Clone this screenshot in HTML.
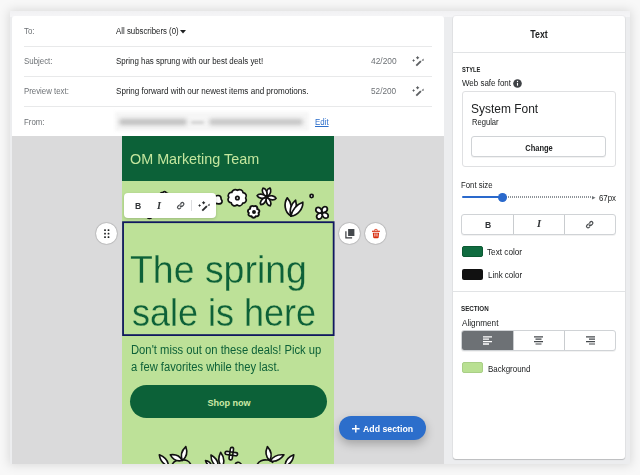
<!DOCTYPE html>
<html><head><meta charset="utf-8"><title>Email editor</title>
<style>
*{box-sizing:border-box;margin:0;padding:0}
html,body{width:640px;height:475px;overflow:hidden;background:#f8f8f8}
body{background:#f8f8f8;font-family:"Liberation Sans",sans-serif;position:relative}
.abs,.t{position:absolute}
.t{white-space:nowrap;display:block}
#frame{left:9.500px;top:10.800px;width:620.500px;height:453.200px;background:#ecedef;box-shadow:0 0 10px 1px rgba(0,0,0,.13)}
#canvas{left:12.200px;top:135.800px;width:432px;height:328px;background:#dadadb}
#card{left:12.400px;top:16px;width:431.600px;height:120px;background:#fff;border-radius:3px 3px 0 0}
.sep{height:1.200px;background:#e8e9ea}
#panel{left:452.500px;top:15.600px;width:172.200px;height:443.200px;background:#fff;border-radius:3px;box-shadow:0 1px 1px rgba(0,0,0,.18),0 0 0 1px rgba(0,0,0,.03)}
#email{left:122px;top:136px;width:212.300px;height:328px;background:#bde198;overflow:hidden}
#ehead{left:0;top:0;width:213px;height:44.800px;background:#0c6138}
#sel{left:122.200px;top:221.500px;width:212.300px;height:114.700px;border:1.800px solid #10185f}
#shop{left:129.5px;top:385px;width:197.5px;height:33px;border-radius:17px;background:#0c6138}
.circ{width:21.200px;height:21.200px;border-radius:50%;background:#fff;box-shadow:0 0 0 .8px rgba(0,0,0,.1),0 0 2px rgba(0,0,0,.15)}
#tb{left:124.200px;top:192.600px;width:92px;height:25.300px;background:#fff;border-radius:4px;box-shadow:0 1px 3px rgba(0,0,0,.18)}
#add{left:338.500px;top:416.100px;width:87.200px;height:24.300px;border-radius:12.200px;background:#2c6ecb;box-shadow:0 4px 10px rgba(0,0,0,.25)}
#fontbox{left:461.5px;top:91px;width:154px;height:76px;border:1px solid #dfe0e2;border-radius:3px;background:#fff}
#change{left:471.100px;top:136.300px;width:135.300px;height:20.600px;border:1px solid #d0d3d6;border-radius:3px;background:#fff;box-shadow:0 1px 0 rgba(0,0,0,.05)}
.grp{left:461.300px;width:154.900px;height:20.5px;border:1px solid #d0d3d6;border-radius:3px;background:#fff;box-shadow:0 1px 0 rgba(0,0,0,.05);overflow:hidden}
.grp i{position:absolute;top:0;bottom:0;width:1px;background:#c9cccf}
.sw{left:461.5px;width:21.5px;height:11px;border-radius:2px}
svg{position:absolute;overflow:visible}
#all{left:0;top:0;width:640px;height:475px;filter:blur(.35px)}

</style></head><body>
<div class="abs" id="all">
<div class="abs" id="frame"></div>
<div class="abs" style="left:10px;top:11px;width:620px;height:5.500px;background:linear-gradient(#f1f1f3,#f5f5f7)"></div>
<div class="abs" id="canvas"></div>
<div class="abs" id="card"></div>
<div class="abs sep" style="left:24px;top:45.5px;width:408px"></div>
<div class="abs sep" style="left:24px;top:75.5px;width:408px"></div>
<div class="abs sep" style="left:24px;top:105.5px;width:408px"></div>
<!-- caret -->
<svg style="left:180px;top:29.7px" width="6" height="4" viewBox="0 0 6 4"><path d="M0 0h6L3 3.6z" fill="#202223"/></svg>
<!-- blurred from -->
<div class="abs" style="left:115px;top:112px;width:194px;height:19px;background:#f6f6f6;filter:blur(1.500px)"></div>
<div class="abs" style="left:119px;top:118.500px;width:68px;height:6.500px;background:#bdbdbd;filter:blur(2px);border-radius:3px"></div>
<div class="abs" style="left:191px;top:120.500px;width:13px;height:3px;background:#d0d0d0;filter:blur(1.500px)"></div>
<div class="abs" style="left:209px;top:118.500px;width:94px;height:6.500px;background:#c2c2c2;filter:blur(2px);border-radius:3px"></div>
<!-- wands -->
<svg class="wand" style="left:412.100px;top:55.900px;color:#5c5f62" width="12" height="11" viewBox="0 0 12 11"><use href="#wand"/></svg>
<svg class="wand" style="left:412.100px;top:85.900px;color:#5c5f62" width="12" height="11" viewBox="0 0 12 11"><use href="#wand"/></svg>
<svg width="0" height="0" style="left:0;top:0"><defs>
<g id="wand"><path d="M4.300 9.700 8.900 5.100" stroke="currentColor" stroke-width="1.900" fill="none"/><path d="M9.500 4.500 11.500 2.500l.2 2.200zM1.6 3.0L2.20 3.90 3.1 4.5 2.20 5.10 1.6 6.0 1.00 5.10 0.10000000000000009 4.5 1.00 3.90zM5.6 -0.10000000000000009L6.32 0.98 7.3999999999999995 1.7 6.32 2.42 5.6 3.5 4.88 2.42 3.8 1.7 4.88 0.98z" fill="currentColor"/></g>
</defs></svg>

<!-- email -->
<div class="abs" id="email">
  <div class="abs" id="ehead"></div>
  <svg id="fl1" style="left:0;top:45px" width="212" height="40" viewBox="122 181 212 40">
    <g fill="#fff" stroke="#111" stroke-width="1.700" stroke-linejoin="round" stroke-linecap="round">
      <!-- peeking flowers near toolbar -->
      <path d="M160.500 196c-1.200-1.800.4-3.800 2.200-3.200.8-1.500 3-1.500 3.600.2 1.800-.2 2.600 1.800 1.500 3z"/>
      <circle cx="149.500" cy="216.300" r="2.200"/>
      <path d="M214 197.5c2-3 7-2.500 7 .5s1.500 1.500 1 4-6.500 2.500-8 0z"/>
      <!-- big scalloped flower -->
      <path transform="translate(.4 .5)" d="M237 189.800c2.800-1.700 5.600.200 5.600 2.400 2.900.300 4.200 3.300 2.600 5.300 1.700 2.600-.200 5.300-2.900 5.100-.800 3-4 3.600-5.700 1.700-2.200 2-5.500.800-5.700-1.900-3-.300-4.200-3.500-2.500-5.400-1.600-2.700.400-5.300 3-5 .600-2.700 3.600-3.600 5.600-2.200z"/>
      <circle cx="237.400" cy="198" r="1.700"/>
      <!-- small 5 petal -->
      <g transform="translate(254 212) scale(1.120) translate(-253.800 -211.400)"><path d="M253.800 206.300c1.800-1 3.400.600 2.800 2.400 2 .200 2.600 2.400 1.200 3.600 1 1.800-.600 3.600-2.400 2.800-.800 1.900-3.200 1.900-3.800 0-1.900.600-3.400-1.200-2.400-2.900-1.500-1.200-.800-3.400 1.200-3.600-.500-1.900 1.400-3.300 3.400-2.300z"/><circle cx="253.800" cy="211.400" r=".9"/></g>
      <!-- daisy -->
      <g transform="translate(266.600 197)">
        <path id="pt" d="M-.2-1c-2.200-2.600-2.100-7 .5-8.600 2.500 1.200 2.700 5.800.5 8.600z" transform="rotate(18)"/>
        <use href="#pt" transform="rotate(78)"/><use href="#pt" transform="rotate(138)"/><use href="#pt" transform="rotate(198)"/><use href="#pt" transform="rotate(258)"/><use href="#pt" transform="rotate(318)"/>
      </g>
      <!-- tulip -->
      <path d="M287.300 197.800c-3.600 5.500-3 14 3.400 18 1.400-6.500.8-13.500-3.400-18z"/>
      <path d="M295.600 200.200c-5 4-6.600 11.200-4.800 15.800 4.600-3 6.600-10.200 4.800-15.800z"/>
      <path d="M302.800 202.200c-6 2-11 8-11.900 13.900 6.600-.8 12.300-7 11.900-13.900z"/>
      <!-- dot -->
      <circle cx="311.600" cy="196" r="1.600"/>
      <!-- 4 petal -->
      <g transform="translate(322 212.800) rotate(38)">
        <path id="p4" d="M0-.6c-3.200-1.200-3.600-6 0-6.800 3.600.8 3.200 5.600 0 6.800z"/>
        <use href="#p4" transform="rotate(90)"/><use href="#p4" transform="rotate(180)"/><use href="#p4" transform="rotate(270)"/>
      </g>
    </g>
  </svg>
  <svg id="fl2" style="left:0;top:308px" width="212" height="20" viewBox="122 444 212 20">
    <g fill="#fff" stroke="#111" stroke-width="1.600" stroke-linejoin="round">
      <path d="M172 465c1.500-4.500 7-6 10-5 3.500-.5 7.500 1 9 5M257 465c1.500-4 6.500-5.500 9.500-5 3-.5 5.500 1 6.500 3M235 465c.5-3 4.500-3.500 5.500-1.500l1.500 1.500" fill="none"/>
      <path d="M168.5 466.0Q167.9 458.0 159.3 454.8Q160.8 463.9 168.5 466.0z"/>
      <path d="M182.0 460.5Q178.8 453.6 170.3 454.8Q174.6 462.3 182.0 460.5z"/>
      <path d="M182.5 460.5Q188.8 455.4 185.8 446.6Q179.1 453.1 182.5 460.5z"/>
      <path d="M211.5 466.0Q210.8 461.3 205.5 460.5Q206.8 465.7 211.5 466.0z"/>
      <path d="M218.0 467.0Q218.8 459.3 211.0 455.0Q210.9 463.9 218.0 467.0z"/>
      <path d="M222.0 467.0Q226.3 459.9 220.6 452.3Q216.4 460.9 222.0 467.0z"/>
      <path d="M269.7 460.5Q273.6 453.4 267.4 446.6Q263.7 455.1 269.7 460.5z"/>
      <path d="M270.3 461.0Q278.4 462.6 284.0 454.8Q274.5 453.8 270.3 461.0z"/>
      <path d="M285.0 466.0Q292.6 463.8 293.8 454.8Q285.3 458.1 285.0 466.0z"/>
      <g transform="translate(231.300 453.600) rotate(8)"><path id="p5" d="M-1.600-1.600v-2.900c0-2.400 3.200-2.400 3.200 0v2.900z"/><use href="#p5" transform="rotate(90)"/><use href="#p5" transform="rotate(180)"/><use href="#p5" transform="rotate(270)"/></g>
    </g>
  </svg>
</div>
<svg style="left:0;top:0" width="640" height="475"><rect x="123.050" y="222.200" width="210.600" height="112.900" fill="none" stroke="#10185f" stroke-width="1.800"/></svg>
<div class="abs" id="shop"></div>

<!-- side controls -->
<div class="abs circ" style="left:96.300px;top:223.300px"></div>
<svg style="left:104px;top:229.200px" width="6" height="9" viewBox="0 0 6 9"><g fill="#202223"><rect x=".150" y=".150" width="1.750" height="1.750" rx=".5"/><rect x="3.650" y=".150" width="1.750" height="1.750" rx=".5"/><rect x=".150" y="3.700" width="1.750" height="1.750" rx=".5"/><rect x="3.650" y="3.700" width="1.750" height="1.750" rx=".5"/><rect x=".150" y="7.200" width="1.750" height="1.750" rx=".5"/><rect x="3.650" y="7.200" width="1.750" height="1.750" rx=".5"/></g></svg>
<div class="abs circ" style="left:339px;top:223.300px"></div>
<svg style="left:344.900px;top:228.900px" width="10" height="10" viewBox="0 0 10 10"><path d="M3.100 0h6.300v7h-6.300z" fill="#45494d"/><path d="M.900 2.200v6.600h6.200" fill="none" stroke="#3a3d40" stroke-width="1.200"/></svg>
<div class="abs circ" style="left:365.300px;top:223.300px"></div>
<svg style="left:372.100px;top:228.800px" width="7.900" height="9.300" viewBox="0 0 9 10.600"><path d="M0 2.600h9" stroke="#d82c0d" stroke-width="1.300" fill="none"/><path d="M3 2V1.100c0-.4.300-.6.700-.6h1.600c.4 0 .7.200.7.600V2" stroke="#d82c0d" stroke-width="1" fill="none"/><path d="M.900 4.200h7.200l-.5 5.200c-.1.800-.6 1.200-1.300 1.200H2.700c-.7 0-1.200-.4-1.300-1.200z" fill="#d82c0d"/><path d="M3.300 5v3.600M5.700 5v3.600" stroke="#fff" stroke-width="1"/></svg>

<!-- toolbar -->
<div class="abs" id="tb"></div>
<svg style="left:176.700px;top:201.900px" width="7.400" height="7.400" viewBox="0 0 10 10"><use href="#lnk"/></svg>
<div class="abs" style="left:191px;top:200px;width:1px;height:11px;background:#dcdddf"></div>
<svg style="left:197.500px;top:200.500px;color:#2a2c2e" width="12" height="11" viewBox="0 0 12 11"><use href="#wand"/></svg>
<svg width="0" height="0" style="left:0;top:0"><defs>
<g id="lnk" fill="none" stroke="#4a4d50" stroke-width="1.600" stroke-linecap="round"><path d="M4.300 5.700a2 2 0 0 0 2.900 0l1.500-1.500a2 2 0 0 0-2.900-2.900l-.7.700"/><path d="M5.700 4.300a2 2 0 0 0-2.900 0L1.300 5.800a2 2 0 0 0 2.900 2.900l.7-.7"/></g>
</defs></svg>

<!-- add section -->
<div class="abs" id="add"></div>
<svg style="left:351.500px;top:425.100px" width="7.600" height="7.600" viewBox="0 0 9 9"><path d="M4.500 0v9M0 4.500h9" stroke="#fff" stroke-width="1.700"/></svg>

<!-- right panel -->
<div class="abs" id="panel"></div>
<div class="abs sep" style="left:452px;top:52px;width:173px;background:#e1e3e5"></div>
<div class="abs sep" style="left:452px;top:291px;width:173px;background:#e1e3e5"></div>
<svg style="left:512.500px;top:79px" width="9" height="9" viewBox="0 0 9 9"><circle cx="4.500" cy="4.500" r="4.300" fill="#3f4246"/><path d="M4.500 4v2.700" stroke="#fff" stroke-width="1.100"/><circle cx="4.500" cy="2.500" r=".65" fill="#fff"/></svg>
<div class="abs" id="fontbox"></div>
<div class="abs" id="change"></div>
<!-- slider -->
<div class="abs" style="left:461.800px;top:196.200px;width:40px;height:2.200px;background:#2a69cc;border-radius:1px"></div>
<div class="abs" style="left:506px;top:196.200px;width:86px;height:2px;background:repeating-linear-gradient(90deg,#8f9499 0 1px,transparent 1px 2px)"></div>
<svg style="left:591.500px;top:195.500px" width="3.500" height="3.500" viewBox="0 0 4 4"><path d="M0 0l4 2-4 2z" fill="#6d7175"/></svg>
<div class="abs" style="left:498.400px;top:192.900px;width:8.800px;height:8.800px;border-radius:50%;background:#2a69cc"></div>
<!-- B I link group -->
<div class="abs grp" style="top:214.300px"><i style="left:50.800px"></i><i style="left:102px"></i></div>
<svg style="left:586.400px;top:220.600px" width="7.400" height="7.400" viewBox="0 0 10 10"><use href="#lnk"/></svg>
<!-- swatches -->
<div class="abs sw" style="top:246px;background:#106c40;border:1px solid #0b5a33"></div>
<div class="abs sw" style="top:268.800px;background:#111"></div>
<div class="abs sw" style="top:362.100px;background:#b9e092;border:1px solid #a9cf86"></div>
<!-- alignment group -->
<div class="abs grp" style="top:330.400px"><div class="abs" style="left:-1px;top:-1px;width:52px;height:20.500px;background:#6d7175;border-radius:3px 0 0 3px"></div><i style="left:50.800px"></i><i style="left:102px"></i></div>
<svg style="left:483px;top:336px" width="9" height="9" viewBox="0 0 9 9"><path d="M0 .800h9M0 3.200h6M0 5.600h9M0 8h6" stroke="#fff" stroke-width="1.300"/></svg>
<svg style="left:534px;top:336px" width="9" height="9" viewBox="0 0 9 9"><path d="M0 .800h9M1.500 3.200h6M0 5.600h9M1.500 8h6" stroke="#45494d" stroke-width="1.200"/></svg>
<svg style="left:585.500px;top:336px" width="9" height="9" viewBox="0 0 9 9"><path d="M0 .800h9M3 3.200h6M0 5.600h9M3 8h6" stroke="#45494d" stroke-width="1.200"/></svg>

<span class="t" style="left:23.72px;transform:scaleX(0.9363);transform-origin:0 50%;top:26.26px;font-size:8.4px;line-height:11.76px;font-weight:400;color:#6d7175;">To:</span>
<span class="t" style="left:24.13px;transform:scaleX(0.9416);transform-origin:0 50%;top:56.25px;font-size:8.4px;line-height:11.76px;font-weight:400;color:#6d7175;">Subject:</span>
<span class="t" style="left:24.31px;transform:scaleX(0.9347);transform-origin:0 50%;top:86.26px;font-size:8.4px;line-height:11.76px;font-weight:400;color:#6d7175;">Preview text:</span>
<span class="t" style="left:24.22px;transform:scaleX(0.9367);transform-origin:0 50%;top:116.56px;font-size:8.4px;line-height:11.76px;font-weight:400;color:#6d7175;">From:</span>
<span class="t" style="left:115.85px;transform:scaleX(0.9350);transform-origin:0 50%;top:26.26px;font-size:8.4px;line-height:11.76px;font-weight:400;color:#202223;">All subscribers (0)</span>
<span class="t" style="left:115.54px;transform:scaleX(0.9433);transform-origin:0 50%;top:56.26px;font-size:8.4px;line-height:11.76px;font-weight:400;color:#202223;">Spring has sprung with our best deals yet!</span>
<span class="t" style="left:115.52px;transform:scaleX(0.9643);transform-origin:0 50%;top:86.23px;font-size:8.4px;line-height:11.76px;font-weight:400;color:#202223;">Spring forward with our newest items and promotions.</span>
<span class="t" style="left:371.01px;transform:scaleX(1.0004);transform-origin:0 50%;top:56.29px;font-size:8.4px;line-height:11.76px;font-weight:400;color:#6d7175;">42/200</span>
<span class="t" style="left:370.86px;transform:scaleX(0.9841);transform-origin:0 50%;top:86.26px;font-size:8.4px;line-height:11.76px;font-weight:400;color:#6d7175;">52/200</span>
<span class="t" style="left:315.18px;transform:scaleX(0.9401);transform-origin:0 50%;top:116.76px;font-size:8.4px;line-height:11.76px;font-weight:400;color:#2c6ecb;text-decoration:underline;">Edit</span>
<span class="t" style="left:130.03px;transform:scaleX(0.9914);transform-origin:0 50%;top:149.37px;font-size:14.5px;line-height:20.3px;font-weight:400;color:#c4e69e;">OM Marketing Team</span>
<span class="t" style="left:130.1px;transform:scaleX(0.9831);transform-origin:0 50%;top:243.65px;font-size:38.1px;line-height:53.34px;font-weight:400;color:#0d6138;-webkit-text-stroke:.3px #bde198;">The spring</span>
<span class="t" style="left:131.56px;transform:scaleX(0.9450);transform-origin:0 50%;top:287.21px;font-size:38.1px;line-height:53.34px;font-weight:400;color:#0d6138;-webkit-text-stroke:.3px #bde198;">sale is here</span>
<span class="t" style="left:130.9px;transform:scaleX(0.8996);transform-origin:0 50%;top:342.36px;font-size:12.5px;line-height:17.5px;font-weight:400;color:#0d6138;">Don't miss out on these deals! Pick up</span>
<span class="t" style="left:130.8px;transform:scaleX(0.8951);transform-origin:0 50%;top:358.56px;font-size:12.5px;line-height:17.5px;font-weight:400;color:#0d6138;">a few favorites while they last.</span>
<span class="t" style="left:228.64px;transform:translateX(-50%) scaleX(0.9425);transform-origin:50% 50%;top:395.92px;font-size:9.6px;line-height:13.44px;font-weight:700;color:#cdeaa6;">Shop now</span>
<span class="t" style="left:362.8px;transform:scaleX(0.8941);transform-origin:0 50%;top:421.54px;font-size:9.8px;line-height:13.72px;font-weight:700;color:#ffffff;">Add section</span>
<span class="t" style="left:134.5px;transform:scaleX(0.9368);transform-origin:0 50%;top:200.36px;font-size:9.2px;line-height:12.88px;font-weight:700;color:#303336;">B</span>
<span class="t" style="left:157.13px;transform:scaleX(1.0780);transform-origin:0 50%;top:198.75px;font-size:9.6px;line-height:13.44px;font-weight:700;color:#303336;font-family:'Liberation Serif',serif;font-style:italic;">I</span>
<span class="t" style="left:484.57px;transform:scaleX(0.9366);transform-origin:0 50%;top:218.76px;font-size:9.2px;line-height:12.88px;font-weight:700;color:#303336;">B</span>
<span class="t" style="left:537.05px;transform:scaleX(1.0893);transform-origin:0 50%;top:217.05px;font-size:9.6px;line-height:13.44px;font-weight:700;color:#303336;font-family:'Liberation Serif',serif;font-style:italic;">I</span>
<span class="t" style="left:539.33px;transform:translateX(-50%) scaleX(0.8805);transform-origin:50% 50%;top:28.46px;font-size:10.0px;line-height:14.0px;font-weight:700;color:#202223;">Text</span>
<span class="t" style="left:461.56px;transform:scaleX(0.7945);transform-origin:0 50%;top:64.85px;font-size:7.2px;line-height:10.08px;font-weight:700;color:#202223;">STYLE</span>
<span class="t" style="left:462.29px;transform:scaleX(0.9500);transform-origin:0 50%;top:78.06px;font-size:8.4px;line-height:11.76px;font-weight:400;color:#202223;">Web safe font</span>
<span class="t" style="left:470.53px;transform:scaleX(0.9069);transform-origin:0 50%;top:100.23px;font-size:13.2px;line-height:18.48px;font-weight:400;color:#202223;">System Font</span>
<span class="t" style="left:472.07px;transform:scaleX(0.9072);transform-origin:0 50%;top:117.16px;font-size:8.4px;line-height:11.76px;font-weight:400;color:#202223;">Regular</span>
<span class="t" style="left:538.81px;transform:translateX(-50%) scaleX(0.8070);transform-origin:50% 50%;top:141.65px;font-size:9.3px;line-height:13.02px;font-weight:700;color:#202223;">Change</span>
<span class="t" style="left:461.24px;transform:scaleX(0.9280);transform-origin:0 50%;top:179.66px;font-size:8.4px;line-height:11.76px;font-weight:400;color:#202223;">Font size</span>
<span class="t" style="left:599.05px;transform:scaleX(0.9353);transform-origin:0 50%;top:192.86px;font-size:8.4px;line-height:11.76px;font-weight:400;color:#202223;">67px</span>
<span class="t" style="left:486.66px;transform:scaleX(0.9774);transform-origin:0 50%;top:247.27px;font-size:8.4px;line-height:11.76px;font-weight:400;color:#202223;">Text color</span>
<span class="t" style="left:487.83px;transform:scaleX(0.9516);transform-origin:0 50%;top:269.97px;font-size:8.4px;line-height:11.76px;font-weight:400;color:#202223;">Link color</span>
<span class="t" style="left:461.37px;transform:scaleX(0.8663);transform-origin:0 50%;top:303.82px;font-size:7.2px;line-height:10.08px;font-weight:700;color:#202223;">SECTION</span>
<span class="t" style="left:461.5px;transform:scaleX(0.9789);transform-origin:0 50%;top:318.26px;font-size:8.4px;line-height:11.76px;font-weight:400;color:#202223;">Alignment</span>
<span class="t" style="left:487.83px;transform:scaleX(0.9493);transform-origin:0 50%;top:363.66px;font-size:8.4px;line-height:11.76px;font-weight:400;color:#202223;">Background</span>
</div>
</body></html>
